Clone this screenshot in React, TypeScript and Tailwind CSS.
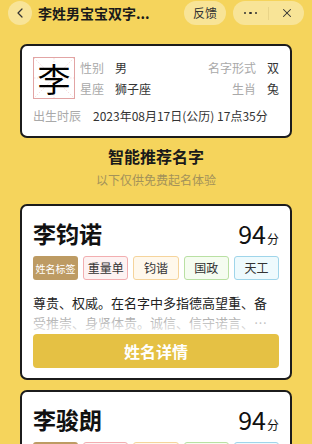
import { ChevronLeft, X } from "lucide-react";

const FONT = { fontFamily: '"Noto Sans CJK SC", "Noto Sans", sans-serif' };

type Tag = { label: string; cls: string };

const TAGS: Tag[] = [
  { label: "重量单", cls: "border-[#f2aeb0] bg-[#fdf2f2]" },
  { label: "钧谐", cls: "border-[#f5d49c] bg-[#fff8ec]" },
  { label: "国政", cls: "border-[#b9e0a3] bg-[#f5fcf0]" },
  { label: "天工", cls: "border-[#9fd5ea] bg-[#eefafd]" },
];

const NAMES = [
  {
    name: "李钧诺",
    score: 94,
    desc: "尊贵、权威。在名字中多指德高望重、备受推崇、身贤体贵。诚信、信守诺言、言而有信、一诺千金之意。",
  },
  {
    name: "李骏朗",
    score: 94,
    desc: "才华出众、前程远大。在名字中多指英俊潇洒、开朗豁达、光明磊落之意。",
  },
];

function Header() {
  return (
    <div className="flex h-[24px] items-center pl-[8px] pr-[8px] mt-[1px]">
      <button
        type="button"
        className="flex h-[24px] w-[24px] items-center justify-center rounded-full bg-[#f8e497] text-[#333]"
      >
        <ChevronLeft size={16} strokeWidth={1.8} />
      </button>
      <div className="ml-[6px] flex-1 text-[14px] font-bold leading-none text-[#1a1a1a]">
        李姓男宝宝双字...
      </div>
      <div className="flex h-[24px] w-[42px] items-center justify-center rounded-full bg-[#f8e497] text-[12px] text-[#333]">
        反馈
      </div>
      <div className="ml-[7px] flex h-[24px] w-[71px] items-center rounded-full bg-[#f8e497] text-[#333]">
        <div className="flex flex-1 items-center justify-center gap-[3px]">
          <span className="h-[2.5px] w-[2.5px] rounded-full bg-[#333]" />
          <span className="h-[2.5px] w-[2.5px] rounded-full bg-[#333]" />
          <span className="h-[2.5px] w-[2.5px] rounded-full bg-[#333]" />
        </div>
        <div className="h-[13px] w-px bg-[#e9d488]" />
        <div className="flex flex-1 items-center justify-center">
          <X size={14} strokeWidth={1.8} />
        </div>
      </div>
    </div>
  );
}

function SurnameBox() {
  return (
    <div className="relative flex h-[42px] w-[42px] shrink-0 items-center justify-center border border-[#e2a4a4]">
      <svg className="absolute inset-0" width="40" height="40" viewBox="0 0 40 40">
        <g stroke="#f0c6c6" strokeWidth="0.6" strokeDasharray="1.5 1.5" fill="none">
          <line x1="0" y1="0" x2="40" y2="40" />
          <line x1="40" y1="0" x2="0" y2="40" />
          <line x1="20" y1="0" x2="20" y2="40" />
          <line x1="0" y1="20" x2="40" y2="20" />
        </g>
      </svg>
      <span className="relative text-[33px] leading-none text-black">李</span>
    </div>
  );
}

function InfoCard() {
  return (
    <div className="mx-[20px] mt-[19px] rounded-[7px] border-2 border-[#1c1c1c] bg-white p-[11px]">
      <div className="flex">
        <SurnameBox />
        <div className="ml-[5px] grid flex-1 grid-rows-2 text-[12px]">
          <div className="flex items-center">
            <span className="w-[35px] text-[#a9a9a9]">性别</span>
            <span className="text-[#333]">男</span>
            <span className="ml-auto text-[#a9a9a9]">名字形式</span>
            <span className="ml-[11px] text-[#333]">双</span>
          </div>
          <div className="flex items-center">
            <span className="w-[35px] text-[#a9a9a9]">星座</span>
            <span className="text-[#333]">狮子座</span>
            <span className="ml-auto text-[#a9a9a9]">生肖</span>
            <span className="ml-[11px] text-[#333]">兔</span>
          </div>
        </div>
      </div>
      <div className="mt-[8px] flex text-[12px] leading-[18px]">
        <span className="w-[60px] text-[#a9a9a9]">出生时辰</span>
        <span className="text-[#333]">2023年08月17日(公历) 17点35分</span>
      </div>
    </div>
  );
}

function NameCard({ name, score, desc }: { name: string; score: number; desc: string }) {
  return (
    <div className="mx-[20px] rounded-[7px] border-2 border-[#1c1c1c] bg-white px-[11px] pb-[10px] pt-[11px]">
      <div className="flex h-[32px] items-center">
        <span className="text-[23px] font-bold leading-none text-[#111]">{name}</span>
        <span className="ml-auto flex items-baseline text-[#111]">
          <span className="text-[25px] leading-none">{score}</span>
          <span className="ml-[1px] text-[12px] leading-none">分</span>
        </span>
      </div>
      <div className="mt-[7px] grid grid-cols-5 gap-[5px]">
        <div className="flex h-[24px] items-center justify-center rounded-[3px] bg-[#bd9b63] text-[10px] text-white">
          姓名标签
        </div>
        {TAGS.map((t) => (
          <div
            key={t.label}
            className={`flex h-[24px] items-center justify-center rounded-[3px] border text-[12px] text-[#333] ${t.cls}`}
          >
            {t.label}
          </div>
        ))}
      </div>
      <div className="relative mt-[13px]">
        <p className="line-clamp-2 text-[13px] leading-[20px] text-[#222]">{desc}</p>
        <div className="absolute bottom-0 left-0 right-0 h-[22px] bg-gradient-to-b from-white/50 to-white/90" />
      </div>
      <button
        type="button"
        className="mt-[1px] flex h-[34px] w-full items-center justify-center rounded-[4px] bg-[#e5c144] text-[16px] font-bold text-white"
      >
        姓名详情
      </button>
    </div>
  );
}

export default function App() {
  return (
    <div className="min-h-screen overflow-hidden bg-[#f5d45c]" style={FONT}>
      <Header />
      <InfoCard />
      <div className="mt-[7px] text-center text-[16px] font-bold leading-[22px] text-[#1a1a1a]">
        智能推荐名字
      </div>
      <div className="mt-[5px] text-center text-[12px] leading-[16px] text-[#a3925a]">
        以下仅供免费起名体验
      </div>
      <div className="mt-[16px] flex flex-col gap-[10px] pb-[20px]">
        {NAMES.map((n) => (
          <NameCard key={n.name} {...n} />
        ))}
      </div>
    </div>
  );
}
